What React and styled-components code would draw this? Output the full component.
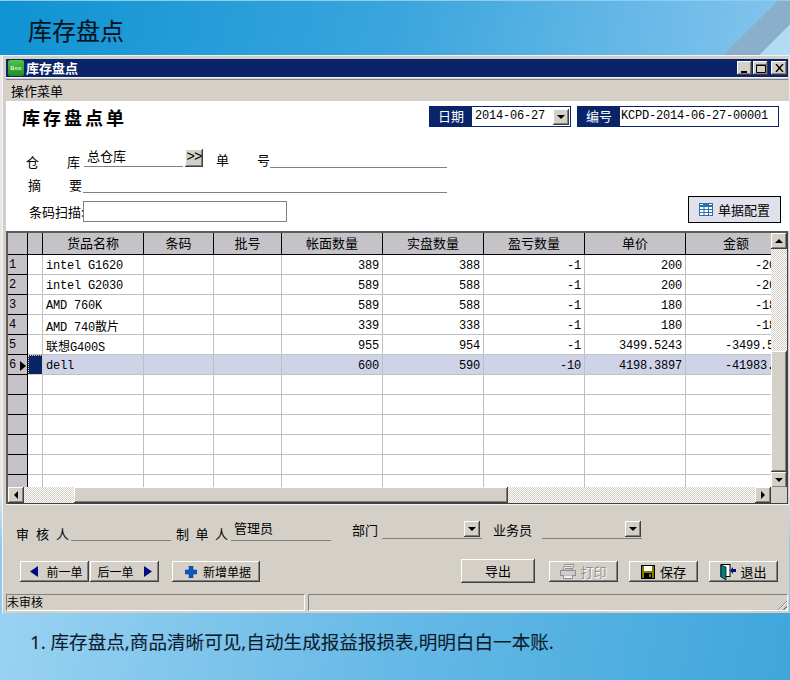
import React from 'react';
import styled, { createGlobalStyle, css } from 'styled-components';

const Global = createGlobalStyle`
  html, body { margin: 0; padding: 0; }
  body { font-family: "Noto Sans CJK SC", "Liberation Sans", sans-serif; font-size: 13px; color: #000; }
  * { box-sizing: border-box; }
`;

const raised = css`
  background: #d4d0c8;
  box-shadow: inset -1px -1px #404040, inset 1px 1px #fff, inset -2px -2px #808080;
`;
const mono = `"Liberation Mono", "Noto Sans CJK SC", monospace`;

const Page = styled.div`
  width: 790px; height: 680px; overflow: hidden;
  display: flex; flex-direction: column;
  background: linear-gradient(#e8e8e8 0 72%, #8ccbef 80%);
`;
const Banner = styled.header`
  height: 55px; flex: none; padding: 13px 0 0 28px;
  font-size: 24px; line-height: 32px; color: #06121c;
  -webkit-text-stroke: 0.1px #06121c;
  background:
    linear-gradient(135deg, transparent 550px, #8baecb 550px, #8baecb 575px, #b2dcf4 575px),
    linear-gradient(100deg, #0f93d3 0%, #3aa5dd 50%, #85c5ee 100%);
  border-top: 1px solid #8ecdee;
`;
const Caption = styled.footer`
  flex: 1; padding: 16px 0 0 30px;
  font-family: "Noto Sans", "Noto Sans CJK SC", sans-serif;
  font-size: 18.6px; line-height: 26px; color: #0c1c2c;
  -webkit-text-stroke: 0.1px #0c1c2c;
  background: linear-gradient(100deg, #9ad2f2 0%, #66b9e6 50%, #3fa6dc 100%);
`;
const Win = styled.section`
  margin: 0 1px 0 2px; height: 558px; flex: none;
  background: #d4d0c8;
  border-top: 1px solid #f2f2f2; border-left: 1px solid #f2f2f2;
  padding: 3px 0 0 3px;
  display: flex; flex-direction: column;
`;
const TitleBar = styled.div`
  height: 18px; margin-right: 1px; flex: none;
  background: #0a246a; color: #fff;
  display: flex; align-items: center;
  padding: 0 1px 0 2px;
  font-weight: 700; font-size: 13px;
`;
const AppIcon = styled.span`
  width: 16px; height: 16px; margin-right: 2px; border-radius: 2px;
  background: linear-gradient(#55c24a, #1f8f1f);
  color: #d8f5d0; font: 700 6px/16px "Liberation Sans", sans-serif; text-align: center;
`;
const TitleText = styled.span`flex: 1; line-height: 18px;`;
const WinBtn = styled.button`
  ${raised}
  width: ${p => p.$w || 15}px; height: 14px; margin-left: ${p => p.$gap || 0}px; border: 0; padding: 0; flex: none;
  display: flex; align-items: center; justify-content: center;
`;
const Sep = styled.div`
  height: 3px; flex: none; margin-right: 1px;
  border-top: 1px solid #f4f4f4; border-bottom: 1px solid #808090;
`;
const Menu = styled.div`
  height: 21px; flex: none; padding: 2px 0 0 5px; line-height: 17px; background: #d4d0c8; font-size: 13px;
`;
const Form = styled.div`
  height: 130px; flex: none; background: #fff;
  display: flex; flex-direction: column;
`;
const TopRow = styled.div`
  display: flex; align-items: flex-start; padding: 5px 10px 0 16px; height: 26px;
`;
const DocTitle = styled.h1`
  margin: 0; font-size: 18px; font-weight: 700; letter-spacing: 3px; line-height: 23px;
`;
const InfoBox = styled.div`
  width: ${p => p.$w}px; height: 21px; margin-left: ${p => p.$auto ? 'auto' : '6px'};
  border: 1px solid #0a246a; background: #fff;
  display: flex; align-items: center;
`;
const InfoLabel = styled.span`
  width: 42px; height: 100%; background: #0a246a; color: #fff; text-align: center; line-height: 18px; font-size: 13px; flex: none;
`;
const InfoValue = styled.span`
  flex: 1; padding-left: ${p => p.$pad}px; font: 12px/19px ${mono}; letter-spacing: -0.2px; white-space: nowrap;
`;
const DropBtn = styled.button`
  ${raised}
  width: 16px; height: 16px; border: 0; padding: 0; flex: none;
  margin: ${p => p.$m || 0};
  display: flex; align-items: center; justify-content: center;
`;
const Tri = styled.i`
  display: block; width: 0; height: 0;
  ${p => p.$dir === 'down' && css`border-left: 4px solid transparent; border-right: 4px solid transparent; border-top: 4px solid #000;`}
  ${p => p.$dir === 'up' && css`border-left: 4px solid transparent; border-right: 4px solid transparent; border-bottom: 4px solid #000;`}
  ${p => p.$dir === 'left' && css`border-top: 4px solid transparent; border-bottom: 4px solid transparent; border-right: 4px solid #000;`}
  ${p => p.$dir === 'right' && css`border-top: 4px solid transparent; border-bottom: 4px solid transparent; border-left: 4px solid #000;`}
`;
const RowPointer = styled.i`
  display: block; width: 0; height: 0;
  border-top: 5px solid transparent; border-bottom: 5px solid transparent; border-left: 6px solid #000;
`;
const FieldRow = styled.div`
  display: flex; align-items: flex-end;
  height: ${p => p.$h}px; margin-top: ${p => p.$top}px; padding-left: ${p => p.$left}px;
  padding-right: ${p => p.$right || 0}px;
`;
const Spread = styled.span`
  width: ${p => p.$w}px; margin-left: ${p => p.$ml || 0}px; margin-bottom: ${p => p.$mb || 0}px; flex: none;
  display: flex; justify-content: space-between; line-height: 16px; font-size: 13px;
`;
const Line = styled.div`
  width: ${p => p.$w}px; height: 100%; margin-left: ${p => p.$ml || 0}px; flex: none;
  border-bottom: 1px solid #808080; padding-left: 3px;
  line-height: 16px; font-size: 13px; margin-bottom: ${p => p.$mb || 0}px;
`;
const MoreBtn = styled.button`
  ${raised}
  width: 18px; height: 18px; margin: 0 0 1px 2px; border: 0; padding: 0 0 2px; flex: none;
  font: 14px/14px "Liberation Mono", monospace; letter-spacing: -1px; color: #000;
`;
const ScanLabel = styled.span`
  width: 54px; flex: none; overflow: hidden; white-space: nowrap; line-height: 18px; margin-bottom: 2px; font-size: 13px;
`;
const ScanInput = styled.input`
  width: 204px; height: 21px; border: 1px solid #808080; background: #fff; margin-bottom: 1px; padding: 0; flex: none;
`;
const ConfigBtn = styled.button`
  width: 93px; height: 27px; margin-left: auto; flex: none;
  border: 1px solid #000; background: #e0e1ea; padding: 0 0 0 10px;
  display: flex; align-items: center; gap: 5px;
  font: 13px/16px "Noto Sans CJK SC", sans-serif; color: #000;
`;
const Frame = styled.div`
  width: 782px; height: 273px; flex: none;
  border-style: solid; border-width: 2px 1px 1px 2px;
  border-color: #5c5c5c #404040 #404040 #5c5c5c;
  display: grid; grid-template-columns: 763px 16px; grid-template-rows: 254px 16px;
  background: #d4d0c8;
`;
const Table = styled.div`overflow: hidden; background: #fff;`;
const cols = '20px 15px 101px 70px 68px 101px 101px 101px 101px 114px';
const HeadRow = styled.div`
  display: grid; grid-template-columns: ${cols}; height: 22px; width: 792px;
`;
const HeadCell = styled.div`
  background: #c5c3c8; border-right: 1px solid #000; border-bottom: 1px solid #000;
  text-align: center; line-height: 20px; font-size: 13px;
  &:last-child { padding-right: 13px; }
`;
const BodyRow = styled.div`
  display: grid; grid-template-columns: ${cols}; height: 20px; width: 792px;
  background: ${p => p.$sel ? '#ced3e8' : '#fff'};
`;
const RowHead = styled.div`
  background: #c5c3c8; border-right: 1px solid #000; border-bottom: 1px solid #000;
  display: flex; align-items: center; justify-content: space-between; padding: 2px 1px 0 1px;
  font: 12px/17px ${mono};
`;
const Marker = styled.div`
  border-right: 1px solid #c0c0c0; border-bottom: 1px solid #c0c0c0;
  ${p => p.$sel && css`background: #0a246a; outline: 1px dotted #e8dc9a; outline-offset: -1px;`}
`;
const Cell = styled.div`
  border-right: 1px solid #c0c0c0; border-bottom: 1px solid #c0c0c0;
  padding: 0 ${p => p.$pr ?? 3}px 0 3px; overflow: hidden;
  text-align: ${p => p.$num ? 'right' : 'left'}; white-space: nowrap;
  font: 12px/22px ${mono}; letter-spacing: -0.2px;
`;
const Cjk = styled.span`font: 12px/22px "Noto Sans CJK SC", sans-serif; letter-spacing: 0;`;
const VBar = styled.div`
  display: flex; flex-direction: column;
  background: repeating-conic-gradient(#fff 0 25%, #d4d0c8 0 50%) 0 0 / 2px 2px;
`;
const HBar = styled.div`
  display: flex;
  background: repeating-conic-gradient(#fff 0 25%, #d4d0c8 0 50%) 0 0 / 2px 2px;
`;
const SBtn = styled.div`
  ${raised}
  width: 16px; height: 16px; flex: none;
  display: flex; align-items: center; justify-content: center;
`;
const VThumb = styled.div`${raised} width: 16px; height: 121px; margin-top: ${p => p.$top}px; flex: none;`;
const HThumb = styled.div`${raised} height: 16px; width: 434px; margin-left: ${p => p.$left}px; flex: none;`;
const Grow = styled.div`flex: 1;`;
const Corner = styled.div`background: #d4d0c8;`;
const Bottom = styled.div`
  flex: 1; border-top: 1px solid #f4f4f4; background: #d4d0c8;
  display: flex; flex-direction: column;
`;
const ActionRow = styled.div`
  display: flex; align-items: flex-start; height: 24px; margin-top: 18px; padding: 0 11px 0 14px;
`;
const Btn = styled.button`
  ${raised}
  width: ${p => p.$w}px; height: ${p => p.$h || 21}px; margin-top: ${p => p.$h ? 0 : 2}px;
  margin-left: ${p => p.$auto ? 'auto' : (p.$ml || 0) + 'px'};
  border: 0; padding: 0 0 0 ${p => p.$pl || 0}px; flex: none;
  display: flex; align-items: center; justify-content: center; gap: ${p => p.$gap ?? 5}px;
  font: ${p => p.$fs || 13}px/16px "Noto Sans CJK SC", sans-serif; color: ${p => p.$off ? '#8f8f8f' : '#000'};
  ${p => p.$off && 'text-shadow: 1px 1px #fff;'}
`;
const Status = styled.div`display: flex; gap: 3px; margin-top: 11px; height: 17px; flex: none;`;
const Pane = styled.div`
  width: ${p => p.$w}px; height: 17px; position: relative;
  border-top: 1px solid #808080; border-left: 1px solid #808080;
  border-bottom: 1px solid #fff; border-right: 1px solid #fff;
  font-size: 12px; line-height: 14px;
`;
const Grip = styled.i`
  position: absolute; right: 0; bottom: 0; width: 12px; height: 12px;
  background: repeating-linear-gradient(135deg, #d4d0c8 0 2px, #808080 2px 3px, #fff 3px 4px);
  clip-path: polygon(100% 0, 100% 100%, 0 100%);
`;

const rows = [
  ['intel G1620', 389, 388, -1, 200, '-200', 16],
  ['intel G2030', 589, 588, -1, 200, '-200', 16],
  ['AMD 760K', 589, 588, -1, 180, '-180', 16],
  [<>AMD 740<Cjk>散片</Cjk></>, 339, 338, -1, 180, '-180', 16],
  [<><Cjk>联想</Cjk>G400S</>, 955, 954, -1, '3499.5243', '-3499.5243', 4],
  ['dell', 600, 590, -10, '4198.3897', '-41983.897', 4],
];
const heads = ['', '', '货品名称', '条码', '批号', '帐面数量', '实盘数量', '盈亏数量', '单价', '金额'];

const NavArrow = ({ right }) => (
  <svg width="8" height="11" viewBox="0 0 8 11">
    <path d={right ? 'M0 0L8 5.5L0 11Z' : 'M8 0L0 5.5L8 11Z'} fill="#000a80" />
  </svg>
);
const ConfigIcon = () => (
  <svg width="14" height="13" viewBox="0 0 14 13">
    <rect x="0.5" y="3.5" width="13" height="9" fill="#fff" stroke="#2a6fb0" />
    <rect x="0" y="0" width="14" height="3" fill="#2a6fb0" />
    <rect x="1" y="1" width="3" height="1" fill="#fff" /><rect x="10" y="1" width="3" height="1" fill="#fff" />
    <path d="M0 6.5H14M0 9.5H14M5 3V13M9.5 3V13" stroke="#2a6fb0" />
  </svg>
);
const PlusIcon = () => (
  <svg width="12" height="12" viewBox="0 0 12 12">
    <path d="M4 0H8V4H12V8H8V12H4V8H0V4H4Z" fill="#0a58c0" stroke="#06388a" strokeWidth="0.5" />
  </svg>
);
const PrintIcon = () => (
  <svg width="16" height="15" viewBox="0 0 16 15" fill="none" stroke="#8f8f8f">
    <path d="M4.5 .5H14L12 6H3Z" fill="#eee" />
    <path d="M5 2.5H12M5 4.5H12" />
    <rect x=".5" y="6.5" width="15" height="5" fill="#ccc" />
    <path d="M3.5 11.5V14.5H12.5V11.5" fill="#eee" />
  </svg>
);
const SaveIcon = () => (
  <svg width="14" height="14" viewBox="0 0 14 14">
    <rect width="14" height="14" fill="#000" />
    <rect x="1" y="1" width="12" height="12" fill="#808000" />
    <rect x="3" y="1" width="8" height="5" fill="#fff" />
    <rect x="3" y="8" width="8" height="5" fill="#000" />
    <rect x="8" y="9" width="2" height="3" fill="#808000" />
  </svg>
);
const ExitIcon = () => (
  <svg width="16" height="16" viewBox="0 0 16 16">
    <rect x="1" y="0.5" width="9" height="12" fill="#fff" stroke="#000" />
    <path d="M1 1L6 3V16L1 13Z" fill="#008080" stroke="#000" strokeWidth="0.7" />
    <path d="M16 5V8H13V10L10 6.5L13 3V5Z" fill="#000a80" />
  </svg>
);

export default function App() {
  return (
    <Page>
      <Global />
      <Banner>库存盘点</Banner>
      <Win>
        <TitleBar>
          <AppIcon>Bos</AppIcon>
          <TitleText>库存盘点</TitleText>
          <WinBtn><svg width="9" height="9"><rect x="1" y="7" width="6" height="2" /></svg></WinBtn>
          <WinBtn $gap={1}><svg width="10" height="9"><path d="M.5 1.5H9.5V8.5H.5ZM0 1H10" fill="none" stroke="#000" /></svg></WinBtn>
          <WinBtn $w={16} $gap={3}><svg width="9" height="8"><path d="M1 0L8 8M8 0L1 8" stroke="#000" strokeWidth="1.4" /></svg></WinBtn>
        </TitleBar>
        <Sep />
        <Menu>操作菜单</Menu>
        <Form>
          <TopRow>
            <DocTitle>库存盘点单</DocTitle>
            <InfoBox $w={142} $auto>
              <InfoLabel>日期</InfoLabel>
              <InfoValue $pad={3}>2014-06-27</InfoValue>
              <DropBtn $m="0 1px 0 0"><Tri $dir="down" /></DropBtn>
            </InfoBox>
            <InfoBox $w={202}>
              <InfoLabel>编号</InfoLabel>
              <InfoValue $pad={1}>KCPD-2014-06-27-00001</InfoValue>
            </InfoBox>
          </TopRow>
          <FieldRow $h={19} $top={22} $left={20}>
            <Spread $w={54} $mb={-2}><span>仓</span><span>库</span></Spread>
            <Line $w={99} $ml={4} $mb={1}>总仓库</Line>
            <MoreBtn>&gt;&gt;</MoreBtn>
            <Spread $w={54} $ml={13}><span>单</span><span>号</span></Spread>
            <Line $w={177} />
          </FieldRow>
          <FieldRow $h={17} $top={8} $left={22}>
            <Spread $w={54}><span>摘</span><span>要</span></Spread>
            <Line $w={364} $ml={1} />
          </FieldRow>
          <FieldRow $h={27} $top={3} $left={23} $right={8}>
            <ScanLabel>条码扫描:</ScanLabel>
            <ScanInput readOnly />
            <ConfigBtn><ConfigIcon />单据配置</ConfigBtn>
          </FieldRow>
        </Form>
        <Frame>
          <Table>
            <HeadRow>{heads.map((h, i) => <HeadCell key={i}>{h}</HeadCell>)}</HeadRow>
            {rows.map((r, i) => {
              const sel = i === 5;
              return (
                <BodyRow key={i} $sel={sel}>
                  <RowHead>{i + 1}{sel && <RowPointer />}</RowHead>
                  <Marker $sel={sel} />
                  <Cell>{r[0]}</Cell><Cell /><Cell />
                  <Cell $num>{r[1]}</Cell><Cell $num>{r[2]}</Cell><Cell $num>{r[3]}</Cell><Cell $num>{r[4]}</Cell>
                  <Cell $num $pr={r[6]}>{r[5]}</Cell>
                </BodyRow>
              );
            })}
            {Array.from({ length: 6 }, (_, i) => (
              <BodyRow key={i}>
                <RowHead /><Marker />
                {Array.from({ length: 8 }, (_, j) => <Cell key={j} />)}
              </BodyRow>
            ))}
          </Table>
          <VBar>
            <SBtn><Tri $dir="up" /></SBtn>
            <VThumb $top={102} />
            <Grow />
            <SBtn><Tri $dir="down" /></SBtn>
          </VBar>
          <HBar>
            <SBtn><Tri $dir="left" /></SBtn>
            <HThumb $left={50} />
            <Grow />
            <SBtn><Tri $dir="right" /></SBtn>
          </HBar>
          <Corner />
        </Frame>
        <Bottom>
          <FieldRow $h={21} $top={15} $left={10}>
            <Spread $w={53} $mb={-1}><span>审</span><span>核</span><span>人</span></Spread>
            <Line $w={100} $ml={2} />
            <Spread $w={52} $ml={5} $mb={-1}><span>制</span><span>单</span><span>人</span></Spread>
            <Line $w={100} $ml={3}>管理员</Line>
            <Spread $w={26} $ml={21} $mb={3}>部门</Spread>
            <Line $w={100} $ml={4} $mb={2} />
            <DropBtn $m="0 0 4px -18px"><Tri $dir="down" /></DropBtn>
            <Spread $w={39} $ml={13} $mb={3}>业务员</Spread>
            <Line $w={100} $ml={10} $mb={2} />
            <DropBtn $m="0 0 4px -17px"><Tri $dir="down" /></DropBtn>
          </FieldRow>
          <ActionRow>
            <Btn $w={69} $gap={8} $fs={12} $pl={4}><NavArrow />前一单</Btn>
            <Btn $w={69} $ml={1} $gap={10} $fs={12}>后一单<NavArrow right /></Btn>
            <Btn $w={88} $ml={13} $gap={6} $fs={12} $pl={4}><PlusIcon />新增单据</Btn>
            <Btn $w={74} $h={24} $auto>导出</Btn>
            <Btn $w={69} $ml={14} $off $gap={4}><PrintIcon />打印</Btn>
            <Btn $w={69} $ml={11}><SaveIcon />保存</Btn>
            <Btn $w={69} $ml={11} $gap={4}><ExitIcon />退出</Btn>
          </ActionRow>
          <Status>
            <Pane $w={299}>未审核</Pane>
            <Pane $w={480}><Grip /></Pane>
          </Status>
        </Bottom>
      </Win>
      <Caption>1. 库存盘点,商品清晰可见,自动生成报益报损表,明明白白一本账.</Caption>
    </Page>
  );
}
